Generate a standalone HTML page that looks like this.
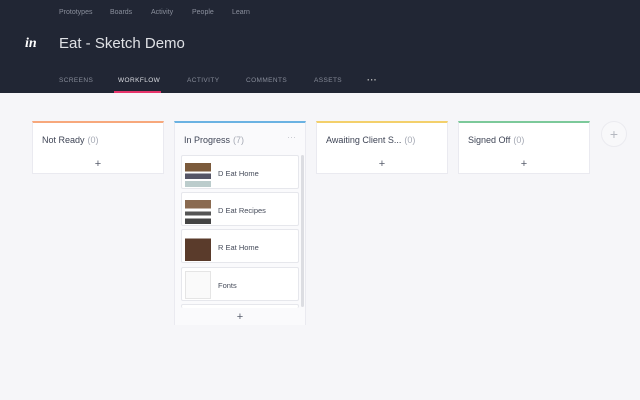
<!DOCTYPE html>
<html><head><style>
*{margin:0;padding:0;box-sizing:border-box}
body{width:640px;height:400px;background:#f6f6f9;font-family:"Liberation Sans",sans-serif;position:relative;overflow:hidden}
.hd{position:absolute;left:0;top:0;width:640px;height:93px;background:#212634}
.t{position:absolute;color:#8a8f9c;font-size:7px;white-space:nowrap}
.tab{position:absolute;top:77px;color:#878c99;font-size:6.5px;letter-spacing:.4px}
.col{position:absolute;top:121px;width:132px;background:#fff;border:1px solid #eaeaf0;border-top:2px solid}
.ct{position:absolute;left:9px;top:12px;font-size:9px;color:#3f4556}
.ct span{color:#a5a9b4;margin-left:3px}
.pl{position:absolute;left:0;width:100%;text-align:center;font-size:11px;color:#555b6a}
.card{position:absolute;left:6px;width:118px;height:34px;background:#fff;border:1px solid #e6e7ec;border-radius:2px}
.th{position:absolute;left:3px;top:3px;width:26px;height:28px;background:#eee}
.cn{position:absolute;left:36px;top:13px;font-size:7.5px;color:#454b5a}
</style></head><body>
<div class="hd">
<div class="t" style="left:59px;top:9px">Prototypes</div>
<div class="t" style="left:110px;top:9px">Boards</div>
<div class="t" style="left:151px;top:9px">Activity</div>
<div class="t" style="left:192px;top:9px">People</div>
<div class="t" style="left:232px;top:9px">Learn</div>
<div style="position:absolute;left:25px;top:36px;color:#fff;font:bold italic 14px 'Liberation Serif',serif">in</div>
<div style="position:absolute;left:59px;top:35px;color:#dfe1e5;font-size:15px">Eat - Sketch Demo</div>
<div class="tab" style="left:59px">SCREENS</div>
<div class="tab" style="left:118px;color:#dcdee3">WORKFLOW</div>
<div class="tab" style="left:187px">ACTIVITY</div>
<div class="tab" style="left:246px">COMMENTS</div>
<div class="tab" style="left:314px">ASSETS</div>
<div class="tab" style="left:367px;top:75px;color:#bbb;font-size:9px;font-weight:bold">···</div>
<div style="position:absolute;left:114px;top:91px;width:47px;height:2px;background:#e6346b"></div>
</div>
<div class="col" style="left:32px;height:53px;border-top-color:#f7a87c"><div class="ct">Not Ready<span>(0)</span></div><div class="pl" style="top:35px">+</div></div>
<div class="col" style="left:174px;height:204px;border-top-color:#6ab2e2;background:#fafafc"><div class="ct">In Progress<span>(7)</span></div>
<div style="position:absolute;right:9px;top:9px;color:#c4c6cd;font-size:9px">···</div>
<div class="card" style="top:32px"><div class="th" style="background:linear-gradient(#fff 0 15%,#7b5a3b 15% 45%,#fff 45% 52%,#556 52% 72%,#fff 72% 78%,#bcc 78%)"></div><div class="cn">D Eat Home</div></div>
<div class="card" style="top:69px"><div class="th" style="background:linear-gradient(#fff 0 15%,#8a6a50 15% 45%,#fff 45% 55%,#555 55% 70%,#fff 70% 80%,#444 80%)"></div><div class="cn">D Eat Recipes</div></div>
<div class="card" style="top:106px"><div class="th" style="background:linear-gradient(#fff 0 20%,#5a3b2b 20%)"></div><div class="cn">R Eat Home</div></div>
<div class="card" style="top:144px"><div class="th" style="background:#fafafa;border:1px solid #e5e5e5"></div><div class="cn">Fonts</div></div>
<div class="card" style="top:181px;height:4px;border-bottom:none"></div>
<div style="position:absolute;left:126px;top:32px;width:3px;height:152px;background:#dcdde2;border-radius:2px"></div>
<div class="pl" style="top:186px;background:#fafafc;height:16px;padding-top:2px">+</div></div>
<div class="col" style="left:316px;height:53px;border-top-color:#f3d06b"><div class="ct">Awaiting Client S...<span>(0)</span></div><div class="pl" style="top:35px">+</div></div>
<div class="col" style="left:458px;height:53px;border-top-color:#7cc99a"><div class="ct">Signed Off<span>(0)</span></div><div class="pl" style="top:35px">+</div></div>
<div style="position:absolute;left:601px;top:121px;width:26px;height:26px;border-radius:50%;border:1px solid #ebebf0;background:#f8f8fa;color:#b5b8c0;text-align:center;line-height:24px;font-size:14px">+</div>
</body></html>
